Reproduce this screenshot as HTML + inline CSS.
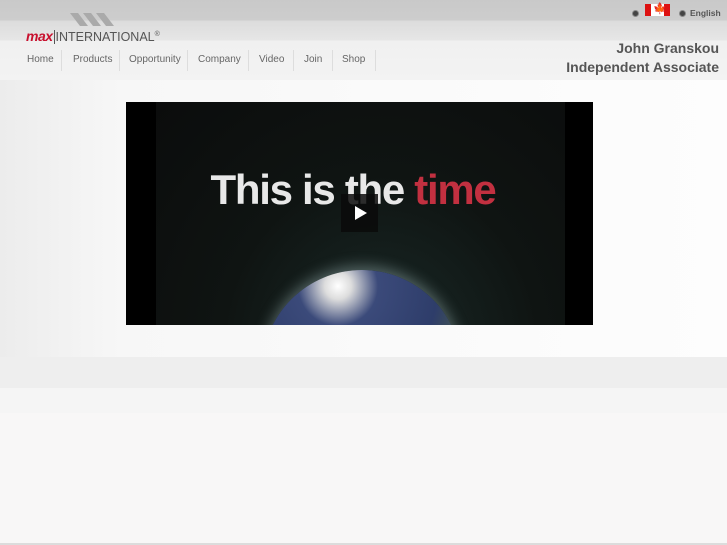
<!DOCTYPE html>
<html><head><meta charset="utf-8"><style>
*{margin:0;padding:0;box-sizing:border-box}
body{width:727px;height:545px;overflow:hidden;background:#f8f7f7;font-family:"Liberation Sans",sans-serif;position:relative}
.hdr{position:absolute;left:0;top:0;width:727px;height:80px;background:linear-gradient(#c9c9c9 0,#cdcdcd 20px,#dcdcdc 21px,#e6e6e6 40px,#f0f0f0 41px,#f3f3f3 80px)}
.main{position:absolute;left:0;top:80px;width:727px;height:277px;background:linear-gradient(90deg,#ececec 0,#f7f7f7 120px,#fafafa 400px,#fdfdfd 727px)}
.b1{position:absolute;left:0;top:357px;width:727px;height:31px;background:#eeeeee}
.b2{position:absolute;left:0;top:388px;width:727px;height:25px;background:#f5f5f5}
.bot{position:absolute;left:0;top:543px;width:727px;height:2px;background:#dcdcdc}
.logo{position:absolute;left:26px;top:28px;font-size:12.5px;color:#555;white-space:nowrap}
.logo i{color:#c8102e;font-weight:bold;font-size:14px;letter-spacing:-0.5px}
.mark{position:absolute;left:70px;top:12px}
.nav{position:absolute;top:50px;font-size:10px;color:#666}
.nav span{position:absolute;top:4px;white-space:nowrap}
.nav b{position:absolute;top:0;width:1px;height:21px;background:#ddd}
.name{position:absolute;right:8px;top:39px;text-align:right;font-weight:bold;font-size:14px;color:#555;line-height:19px}
.eng{position:absolute;left:679px;top:8px;font-size:8.5px;font-weight:bold;color:#555}
.dot{display:inline-block;width:7px;height:7px;border-radius:50%;background:#444;border:1.5px solid #888;vertical-align:-1px;margin-right:4px}
.flag{position:absolute;left:645px;top:4px;width:25px;height:12px;background:linear-gradient(90deg,#d11 0 6px,#fff 6px 19px,#d11 19px)}
.video{position:absolute;left:126px;top:102px;width:467px;height:223px;background:#000;overflow:hidden}
.inner{position:absolute;left:30px;top:0;width:409px;height:223px;background:radial-gradient(ellipse at 55% 110%,#1a2a28 0,#0f1412 50%,#0b0c0c 100%)}
.globe{position:absolute;left:136px;top:168px;width:200px;height:200px;border-radius:50%;background:radial-gradient(circle at 38% 8%,#fff 0,#ddd 6%,#3b4a7a 18%,#2e3d6a 45%,#556a3a 70%,#2a3550 100%);box-shadow:0 -4px 14px rgba(200,230,230,.35)}
.title{position:absolute;left:0;width:454px;top:64px;text-align:center;font-weight:bold;font-size:42px;color:#e8e8e8;letter-spacing:-1.3px}
.title b{color:#c23040}
.play{position:absolute;left:215px;top:92px;width:37px;height:38px;background:rgba(10,10,10,.85)}
.play:after{content:"";position:absolute;left:14px;top:12px;border-left:12px solid #fff;border-top:7px solid transparent;border-bottom:7px solid transparent}
</style></head><body>
<div class="hdr"></div><div class="main"></div><div class="b1"></div><div class="b2"></div><div class="bot"></div>
<svg class="mark" width="46" height="15" viewBox="0 0 46 15"><path d="M0 1h8l10 13h-8zM13 1h8l10 13h-8zM26 1h8l10 13h-8z" fill="#aaa"/></svg>
<div class="logo"><i>max</i><span style="border-left:1px solid #555;margin-left:1px;padding-left:1px">INTERNATIONAL</span><sup style="font-size:7px">®</sup></div>
<div class="nav">
<span style="left:27px">Home</span><b style="left:61px"></b>
<span style="left:73px">Products</span><b style="left:119px"></b>
<span style="left:129px">Opportunity</span><b style="left:187px"></b>
<span style="left:198px">Company</span><b style="left:248px"></b>
<span style="left:259px">Video</span><b style="left:293px"></b>
<span style="left:304px">Join</span><b style="left:332px"></b>
<span style="left:342px">Shop</span><b style="left:375px"></b>
</div>
<span class="dot" style="position:absolute;left:632px;top:10px"></span>
<div class="flag"><span style="position:absolute;left:8px;top:-2px;color:#d11;font-size:11px">🍁</span></div>
<div class="eng"><span class="dot"></span>English</div>
<div class="name">John Granskou<br>Independent Associate</div>
<div class="video"><div class="inner"></div><div class="globe"></div><div class="title">This is the <b>time</b></div><div class="play"></div></div>
</body></html>
